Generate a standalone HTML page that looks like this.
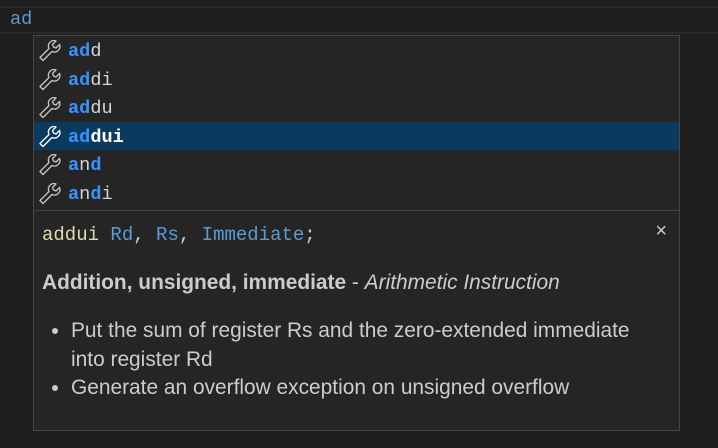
<!DOCTYPE html>
<html><head><meta charset="utf-8"><style>
html,body{margin:0;padding:0;width:718px;height:448px;overflow:hidden;background:#1e1e1e;}
.mono{font-family:"Liberation Mono",monospace;font-size:18.6px;}
.hl{position:absolute;left:0;width:718px;height:2px;background:#282828;}
#w{position:absolute;left:33px;top:35px;width:645px;height:394px;background:#252526;border:1px solid #454545;}
.row{position:absolute;left:0;width:645px;height:28.5px;color:#d4d4d4;}
.row svg{position:absolute;left:4px;top:4px;}
.row span.t{position:absolute;left:34px;top:4px;line-height:24px;}
.m{color:#3794ff;font-weight:bold;}
.sel{background:#0b3a5e;color:#fff;}
#d{position:absolute;left:0;top:174px;width:645px;height:220px;border-top:1px solid #454545;font-family:"Liberation Sans",sans-serif;color:#cccccc;}
</style></head><body>
<div class="hl" style="top:6px"></div>
<div class="hl" style="top:32px"></div>
<div class="mono" style="position:absolute;left:10px;top:8px;line-height:24px;color:#569cd6">ad</div>
<div id="w">
<div class="row" style="top:0"><svg width="24" height="22" viewBox="0 0 24 22"><path d="M3 19 L12 10 A5.5 5.5 0 0 1 19 2.5 L15.5 6 L16.5 8.5 L19 9.5 L22.5 6 A5.5 5.5 0 0 1 15 13 L6 22 Z" fill="none" stroke="#c5c5c5" stroke-width="1.3" stroke-linejoin="round" transform="translate(-1,-1.5)"/></svg><span class="t mono"><span class="m">ad</span>d</span></div>
<div class="row" style="top:28.5px"><svg width="24" height="22" viewBox="0 0 24 22"><path d="M3 19 L12 10 A5.5 5.5 0 0 1 19 2.5 L15.5 6 L16.5 8.5 L19 9.5 L22.5 6 A5.5 5.5 0 0 1 15 13 L6 22 Z" fill="none" stroke="#c5c5c5" stroke-width="1.3" stroke-linejoin="round" transform="translate(-1,-1.5)"/></svg><span class="t mono"><span class="m">ad</span>di</span></div>
<div class="row" style="top:57px"><svg width="24" height="22" viewBox="0 0 24 22"><path d="M3 19 L12 10 A5.5 5.5 0 0 1 19 2.5 L15.5 6 L16.5 8.5 L19 9.5 L22.5 6 A5.5 5.5 0 0 1 15 13 L6 22 Z" fill="none" stroke="#c5c5c5" stroke-width="1.3" stroke-linejoin="round" transform="translate(-1,-1.5)"/></svg><span class="t mono"><span class="m">ad</span>du</span></div>
<div class="row sel" style="top:85.5px"><svg width="24" height="22" viewBox="0 0 24 22"><path d="M3 19 L12 10 A5.5 5.5 0 0 1 19 2.5 L15.5 6 L16.5 8.5 L19 9.5 L22.5 6 A5.5 5.5 0 0 1 15 13 L6 22 Z" fill="none" stroke="#ffffff" stroke-width="1.3" stroke-linejoin="round" transform="translate(-1,-1.5)"/></svg><span class="t mono" style="font-weight:bold"><span class="m">ad</span>dui</span></div>
<div class="row" style="top:114px"><svg width="24" height="22" viewBox="0 0 24 22"><path d="M3 19 L12 10 A5.5 5.5 0 0 1 19 2.5 L15.5 6 L16.5 8.5 L19 9.5 L22.5 6 A5.5 5.5 0 0 1 15 13 L6 22 Z" fill="none" stroke="#c5c5c5" stroke-width="1.3" stroke-linejoin="round" transform="translate(-1,-1.5)"/></svg><span class="t mono"><span class="m">a</span>n<span class="m">d</span></span></div>
<div class="row" style="top:142.5px"><svg width="24" height="22" viewBox="0 0 24 22"><path d="M3 19 L12 10 A5.5 5.5 0 0 1 19 2.5 L15.5 6 L16.5 8.5 L19 9.5 L22.5 6 A5.5 5.5 0 0 1 15 13 L6 22 Z" fill="none" stroke="#c5c5c5" stroke-width="1.3" stroke-linejoin="round" transform="translate(-1,-1.5)"/></svg><span class="t mono"><span class="m">a</span>n<span class="m">d</span>i</span></div>
<div id="d">
<div class="mono" style="position:absolute;left:8px;top:12px;line-height:24px;font-size:19px"><span style="color:#dcdcaa">addui</span> <span style="color:#569cd6">Rd</span>, <span style="color:#569cd6">Rs</span>, <span style="color:#569cd6">Immediate</span>;</div>
<div style="position:absolute;right:12px;top:9px;font-size:20px;color:#ccc">×</div>
<div style="position:absolute;left:8px;top:60px;font-size:20.9px;line-height:24px;white-space:nowrap"><b>Addition, unsigned, immediate</b> - <i>Arithmetic Instruction</i></div>
<ul style="position:absolute;left:0;top:106px;margin:0;padding-left:37px;font-size:20.9px;line-height:28.5px;width:575px">
<li>Put the sum of register Rs and the zero-extended immediate<br>into register Rd</li>
<li>Generate an overflow exception on unsigned overflow</li>
</ul>
</div>
</div>
</body></html>
